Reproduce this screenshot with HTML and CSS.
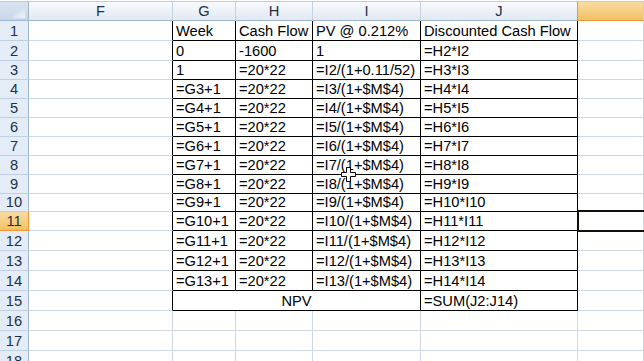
FILE: index.html
```html
<!DOCTYPE html>
<html lang="en">
    <head>
        <meta charset="UTF-8" />
        <title>NPV sheet</title>
        <link rel="stylesheet" href="styles.css">
    </head>

    <body>
        <div class="sheet">
            <!-- column headers -->
            <div class="corner">
                <svg width="14" height="12" viewBox="0 0 14 12">
                    <defs>
                        <linearGradient id="tri" x1="0" y1="0" x2="1" y2="1">
                            <stop offset="0" stop-color="#b5c7df" />
                            <stop offset="1" stop-color="#f4f7fb" />
                        </linearGradient>
                    </defs>
                    <polygon points="14,0 14,12 0,12" fill="url(#tri)" />
                </svg>
            </div>
            <div class="ch">F</div>
            <div class="ch">G</div>
            <div class="ch">H</div>
            <div class="ch">I</div>
            <div class="ch">J</div>
            <div class="ch on">&nbsp;</div>

            <div class="rh">1</div><div class="c edge"></div>
            <div class="c t">Week</div><div class="c t">Cash Flow</div><div class="c t">PV @ 0.212%</div><div class="c t">Discounted Cash Flow</div><div class="c"></div>

            <div class="rh">2</div><div class="c edge"></div>
            <div class="c t">0</div><div class="c t">-1600</div><div class="c t">1</div><div class="c t">=H2*I2</div><div class="c"></div>

            <div class="rh">3</div><div class="c edge"></div>
            <div class="c t">1</div><div class="c t">=20*22</div><div class="c t">=I2/(1+0.11/52)</div><div class="c t">=H3*I3</div><div class="c"></div>

            <div class="rh">4</div><div class="c edge"></div>
            <div class="c t">=G3+1</div><div class="c t">=20*22</div><div class="c t">=I3/(1+$M$4)</div><div class="c t">=H4*I4</div><div class="c"></div>

            <div class="rh">5</div><div class="c edge"></div>
            <div class="c t">=G4+1</div><div class="c t">=20*22</div><div class="c t">=I4/(1+$M$4)</div><div class="c t">=H5*I5</div><div class="c"></div>

            <div class="rh">6</div><div class="c edge"></div>
            <div class="c t">=G5+1</div><div class="c t">=20*22</div><div class="c t">=I5/(1+$M$4)</div><div class="c t">=H6*I6</div><div class="c"></div>

            <div class="rh">7</div><div class="c edge"></div>
            <div class="c t">=G6+1</div><div class="c t">=20*22</div><div class="c t">=I6/(1+$M$4)</div><div class="c t">=H7*I7</div><div class="c"></div>

            <div class="rh">8</div><div class="c edge"></div>
            <div class="c t">=G7+1</div><div class="c t">=20*22</div><div class="c t cursor-cell">=I7/(1+$M$4)
                <svg class="cursor" width="15" height="15" viewBox="0 0 15 15">
                    <path d="M5.5 0.5H9.5V5.5H14.5V9.5H9.5V14.5H5.5V9.5H0.5V5.5H5.5Z" fill="#fff" stroke="#000" />
                </svg>
            </div><div class="c t">=H8*I8</div><div class="c"></div>

            <div class="rh">9</div><div class="c edge"></div>
            <div class="c t">=G8+1</div><div class="c t">=20*22</div><div class="c t">=I8/(1+$M$4)</div><div class="c t">=H9*I9</div><div class="c"></div>

            <div class="rh">10</div><div class="c edge"></div>
            <div class="c t">=G9+1</div><div class="c t">=20*22</div><div class="c t">=I9/(1+$M$4)</div><div class="c t">=H10*I10</div><div class="c"></div>

            <div class="rh on">11</div><div class="c edge"></div>
            <div class="c t">=G10+1</div><div class="c t">=20*22</div><div class="c t">=I10/(1+$M$4)</div><div class="c t">=H11*I11</div><div class="c sel"></div>

            <div class="rh">12</div><div class="c edge"></div>
            <div class="c t">=G11+1</div><div class="c t">=20*22</div><div class="c t">=I11/(1+$M$4)</div><div class="c t">=H12*I12</div><div class="c"></div>

            <div class="rh">13</div><div class="c edge"></div>
            <div class="c t">=G12+1</div><div class="c t">=20*22</div><div class="c t">=I12/(1+$M$4)</div><div class="c t">=H13*I13</div><div class="c"></div>

            <div class="rh">14</div><div class="c edge"></div>
            <div class="c t">=G13+1</div><div class="c t">=20*22</div><div class="c t">=I13/(1+$M$4)</div><div class="c t">=H14*I14</div><div class="c"></div>

            <div class="rh">15</div><div class="c edge"></div>
            <div class="c t merged">NPV</div><div class="c t">=SUM(J2:J14)</div><div class="c"></div>

            <div class="rh">16</div><div class="c"></div>
            <div class="c"></div><div class="c"></div><div class="c"></div><div class="c"></div><div class="c"></div>

            <div class="rh">17</div><div class="c"></div>
            <div class="c"></div><div class="c"></div><div class="c"></div><div class="c"></div><div class="c"></div>

            <div class="rh">18</div><div class="c"></div>
            <div class="c"></div><div class="c"></div><div class="c"></div><div class="c"></div><div class="c"></div>
        </div>
    </body>
</html>
```

FILE: styles.css
```css
* {
    margin: 0;
    padding: 0;
    box-sizing: border-box;
}

html,
body {
    height: 100%;
    overflow: hidden;
    background: #fff;
}

body {
    font-family: "Liberation Sans", Arial, sans-serif;
    font-size: 11pt;
    color: #000;
}

.sheet {
    display: grid;
    grid-template-columns: 29px 144px 63px 77px 108px 157px 1fr;
    /* header, then rows 1..18 */
    grid-template-rows: 20px 20px 20px 19px 19px 19px 19px 19px 19px 19px 18px 19px 20px 20px 20px 20px 20px 20px 20px;
    padding-top: 1px;
}

/* header strip */
.corner {
    display: flex;
    align-items: flex-end;
    justify-content: flex-end;
    padding: 0 3px 2px 0;
    background: linear-gradient(#d9e4f2, #c9d7ea);
    border-top: 1px solid #c2ccd8;
    border-right: 1px solid #9eb6ce;
    border-bottom: 1px solid #9eb6ce;
}

.corner svg {
    display: block;
}

.ch {
    display: flex;
    align-items: flex-end;
    justify-content: center;
    line-height: 17px;
    color: #1b3049;
    background: linear-gradient(#f8fafd, #e2e9f2);
    border-top: 1px solid #c2ccd8;
    border-right: 1px solid #c5d1e0;
    border-bottom: 1px solid #9eb6ce;
}

.ch.on {
    background: linear-gradient(#f9dba2, #f1c262);
    border-left: 1px solid #f29536;
    border-bottom-color: #f29536;
    margin-left: -1px;
}

.rh {
    display: flex;
    align-items: flex-end;
    justify-content: center;
    line-height: 17px;
    color: #1b3049;
    background: #e4ecf7;
    border-right: 1px solid #9eb6ce;
    border-bottom: 1px solid #c0cfe1;
}

.rh.on {
    background: linear-gradient(#f9dba2, #f1c262);
    border-right-color: #f29536;
    border-bottom-color: #f29536;
}

/* body cells */
.c {
    display: flex;
    align-items: flex-end;
    padding: 0 3px;
    line-height: 17px;
    white-space: nowrap;
    border-right: 1px solid #d0d7e5;
    border-bottom: 1px solid #d0d7e5;
}

.c.edge {
    border-right-color: #000;
}

.c.t {
    border-right-color: #000;
    border-bottom-color: #000;
}

.c.merged {
    grid-column: span 3;
    justify-content: center;
}

/* active cell */
.sel {
    position: relative;
}

.sel::after {
    content: "";
    position: absolute;
    top: -2px;
    left: -1px;
    right: -4px;
    bottom: -2px;
    border: 2px solid #14110c;
}

/* mouse pointer over the sheet */
.cursor-cell {
    position: relative;
}

.cursor {
    position: absolute;
    left: 28px;
    top: 11px;
}
```
